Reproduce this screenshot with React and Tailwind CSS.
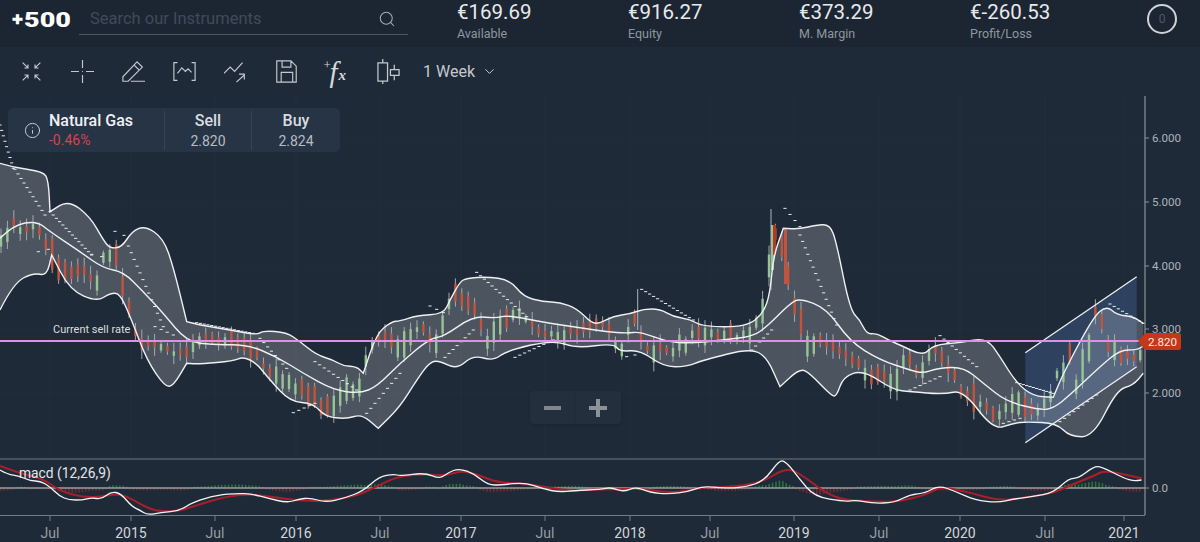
import React from "react";
import { Search, Info, ChevronDown } from "lucide-react";

// helpers: the point lists were read off zoomed crops, so map them back to page coords
const z = (ox, pts) => pts.map(([x, y]) => [ox + x / 3, 160 + y / 3]);
const m = (ox, pts) => pts.map(([x, y]) => [ox + x / 2.613, 450 + y / 3]);

// midpoint quadratic smoothing so the bands don't look like polygons
const smooth = (pts) => {
  let d = `M${pts[0][0].toFixed(1)} ${pts[0][1].toFixed(1)}`;
  for (let i = 1; i < pts.length - 1; i++) {
    const mx = (pts[i][0] + pts[i + 1][0]) / 2;
    const my = (pts[i][1] + pts[i + 1][1]) / 2;
    d += ` Q${pts[i][0].toFixed(1)} ${pts[i][1].toFixed(1)} ${mx.toFixed(1)} ${my.toFixed(1)}`;
  }
  const last = pts[pts.length - 1];
  return `${d} L${last[0].toFixed(1)} ${last[1].toFixed(1)}`;
};

const at = (pts, x) => {
  for (let i = 0; i < pts.length - 1; i++) {
    if (x >= pts[i][0] && x <= pts[i + 1][0]) {
      const t = (x - pts[i][0]) / (pts[i + 1][0] - pts[i][0] || 1);
      return pts[i][1] + (pts[i + 1][1] - pts[i][1]) * t;
    }
  }
  return pts[pts.length - 1][1];
};

// repeated points keep the sharp notches at the band breaks
const upper = [
  ...z(0, [[0,10],[40,22],[130,35],[145,60],[150,155],[150,155],[205,120],[270,170],[310,240],[330,265],[365,262],[395,215],[435,197],[490,235],[520,320],[560,485],[560,485],[600,495],[690,510],[770,525],[790,512],[860,517],[900,545],[950,585],[1000,600],[1030,618],[1070,620],[1090,640],[1090,640],[1130,520],[1175,485]]),
  ...z(400, [[0,483],[50,467],[130,462],[150,420],[180,365],[200,355],[260,350],[330,360],[370,410],[430,425],[480,427],[530,445],[575,490],[600,490],[640,468],[690,462],[730,447],[780,447],[820,470],[870,478],[910,500],[1040,500],[1090,460],[1110,400],[1120,290],[1150,205],[1150,205]]),
  ...z(800, [[0,207],[40,197],[90,192],[110,250],[150,450],[180,480],[200,522],[230,520],[265,540],[300,555],[370,588],[400,555],[480,548],[560,533],[600,590],[650,670],[700,708],[760,712],[760,712],[790,640],[880,470],[920,437],[950,465],[1000,470],[1030,490]]),
];
const lower = [
  ...z(0, [[0,450],[40,370],[100,338],[140,348],[155,285],[155,285],[210,390],[290,425],[330,400],[360,400],[395,480],[440,600],[495,680],[520,678],[560,610],[560,610],[600,612],[700,603],[730,590],[770,610],[810,660],[870,725],[940,730],[975,770],[1040,777],[1085,762],[1135,805],[1135,805]]),
  ...z(400, [[0,740],[50,660],[90,605],[120,603],[170,628],[220,585],[280,603],[320,572],[460,540],[530,565],[640,550],[660,575],[720,570],[790,620],[860,620],[910,600],[1050,565],[1100,590],[1140,680],[1140,680]]),
  ...z(800, [[0,625],[30,640],[95,708],[110,708],[130,650],[190,630],[280,690],[330,695],[430,703],[490,690],[580,810],[640,790],[680,785],[770,790],[810,830],[880,830],[950,690],[1000,675],[1030,640]]),
];
const middle = [
  ...z(0, [[0,235],[40,195],[110,183],[150,215],[240,275],[310,325],[370,335],[430,395],[490,460],[560,545],[640,555],[740,553],[830,590],[910,640],[1000,690],[1080,700],[1130,680]]),
  ...z(400, [[0,610],[90,535],[130,530],[220,468],[290,475],[320,465],[450,490],[550,505],[620,515],[680,520],[720,515],[800,545],[870,550],[970,540],[1050,530],[1090,510],[1170,430]]),
  ...z(800, [[0,415],[80,445],[150,545],[240,600],[330,630],[370,640],[410,625],[490,620],[550,670],[620,725],[720,750],[760,745],[810,705],[900,620],[960,570],[1010,570],[1030,558]]),
];
const price = [
  ...z(0, [[0,235],[40,190],[70,205],[110,190],[130,225],[155,270],[180,345],[230,330],[290,365],[320,270],[345,280],[370,380],[400,500],[440,560],[500,560],[550,590],[600,540],[700,545],[770,590],[830,640],[880,680],[950,720],[980,745],[1040,700],[1085,680],[1100,600],[1135,530]]),
  ...z(400, [[0,570],[60,500],[110,560],[150,410],[180,400],[220,450],[260,540],[300,490],[360,450],[420,510],[480,520],[560,510],[620,490],[660,570],[700,480],[740,570],[800,570],[870,540],[920,515],[980,520],[1040,540],[1090,460],[1120,220],[1150,250],[1170,400]]),
  ...z(800, [[0,480],[30,570],[70,545],[130,590],[200,640],[280,670],[320,590],[360,640],[400,570],[430,590],[460,650],[500,710],[560,740],[590,780],[640,720],[680,730],[720,770],[770,660],[810,590],[830,680],[870,540],[890,440],[930,560],[970,590],[1010,600],[1030,560]]),
];

const macdWhite = [
  ...m(0, [[0,60],[20,73],[50,78],[80,93],[105,93],[130,110],[155,138],[180,150],[215,150],[240,143],[265,148],[290,125],[315,130],[345,170],[365,180],[385,195],[420,188],[470,182],[505,155],[570,135],[620,130],[660,132],[700,145],[750,158],[780,148],[810,143],[850,157],[900,145],[950,122],[990,80],[1030,72],[1045,78],[1110,68],[1150,87],[1170,68],[1200,55],[1240,72],[1275,105],[1310,105],[1370,97],[1420,117],[1460,126],[1500,122]]),
  ...m(600, [[0,118],[30,112],[60,126],[95,110],[130,128],[180,132],[230,125],[270,108],[320,115],[380,112],[430,92],[470,28],[490,40],[520,85],[560,140],[640,155],[670,150],[710,160],[770,158],[810,133],[850,130],[885,106],[930,125],[980,150],[1040,158],[1080,147],[1130,140],[1185,128],[1225,85],[1250,85],[1290,50],[1310,50],[1370,85],[1395,93],[1415,90]]),
];
const macdRed = [
  ...m(0, [[0,48],[50,70],[110,85],[160,125],[220,142],[270,140],[310,130],[350,150],[390,178],[430,185],[470,182],[530,160],[590,140],[650,132],[720,142],[770,150],[850,155],[940,135],[990,105],[1040,80],[1110,72],[1160,78],[1210,62],[1250,75],[1300,98],[1370,100],[1440,115],[1500,122]]),
  ...m(600, [[0,118],[60,118],[100,115],[180,128],[230,122],[270,112],[330,112],[420,100],[490,50],[540,85],[590,130],[640,150],[720,155],[780,155],[850,135],[890,110],[960,125],[1050,155],[1130,138],[1185,130],[1230,105],[1290,78],[1320,60],[1415,85]]),
];

// parabolic sar runs: [offset, x0, y0, x1, y1, dashes] in crop coords
const sarRuns = [
  [0, 0, -105, 40, 25, 9], [0, 45, 28, 135, 165, 11], [0, 150, 155, 275, 285, 14], [0, 115, 275, 145, 268, 2], [0, 275, 283, 305, 290, 2],
  [0, 345, 214, 372, 226, 2], [0, 385, 258, 490, 500, 13], [0, 465, 500, 520, 525, 4], [0, 590, 488, 760, 520, 16],
  [0, 780, 535, 860, 625, 8], [0, 945, 605, 1070, 690, 10], [0, 880, 758, 945, 730, 5], [0, 1100, 760, 1200, 640, 9],
  [400, 135, 592, 220, 510, 8], [400, 345, 592, 460, 540, 9], [400, 90, 438, 130, 458, 3], [400, 230, 337, 380, 470, 14],
  [400, 725, 388, 880, 480, 14], [400, 680, 590, 705, 585, 2], [400, 1055, 570, 1115, 510, 6], [400, 1155, 145, 1200, 200, 4],
  [800, 0, 225, 110, 495, 15], [800, 420, 527, 530, 620, 10], [800, 330, 690, 420, 650, 7], [800, 610, 790, 660, 775, 4],
  [800, 780, 785, 890, 705, 9], [800, 930, 432, 1030, 490, 9], [800, 650, 668, 760, 700, 12],
];

const rnd = (i) => {
  const v = Math.sin(i * 127.1 + 11.7) * 43758.5453;
  return v - Math.floor(v);
};

const candles = [];
for (let i = 0, x = 1; x < 1143; i++, x += 6.4) {
  const y = at(price, x) + (rnd(i + 7) - 0.5) * 10;
  const next = at(price, x + 6.4);
  const up = next + (rnd(i) - 0.5) * 14 < y;
  const size = 4 + rnd(i + 40) * rnd(i + 41) * 24 + Math.abs(next - y) * 0.4;
  candles.push({ x, y, up, size, wick: 2 + rnd(i + 90) * 7 });
}

const xLabels = [
  [50, "Jul"], [131, "2015"], [215, "Jul"], [296, "2016"], [380, "Jul"], [461, "2017"], [545, "Jul"],
  [630, "2018"], [710, "Jul"], [794, "2019"], [879, "Jul"], [960, "2020"], [1045, "Jul"], [1124, "2021"],
];
const yLabels = [[138, "6.000"], [202, "5.000"], [266, "4.000"], [329, "3.000"], [393, "2.000"], [488, "0.0"]];

function Chart() {
  const bars = [];
  for (let x = 0; x < 1142; x += 3.4) {
    bars.push({ x, d: (at(macdRed, x) - at(macdWhite, x)) * 0.7 + 3 * Math.sin(x / 17) });
  }
  return (
    <svg className="block" width="1200" height="446" viewBox="0 96 1200 446" fontFamily="Roboto, sans-serif">
      {xLabels.map(([x]) => (
        <line key={x} x1={x} x2={x} y1="96" y2="459" stroke="#ffffff" strokeOpacity="0.025" />
      ))}
      {yLabels.slice(0, 5).map(([y]) => (
        <line key={y} x1="0" x2="1145" y1={y} y2={y} stroke="#ffffff" strokeOpacity="0.015" />
      ))}

      <polygon points="1025.3,352.7 1136.7,276.7 1136.7,366.7 1025.3,442.7" fill="#3a5682" fillOpacity="0.55" />
      <path d={`${smooth(upper)} ${smooth([...lower].reverse()).replace("M", "L")} Z`} fill="#ffffff" fillOpacity="0.2" />

      {candles.map((c, i) => (
        <g key={i}>
          <line x1={c.x} x2={c.x} y1={c.y - c.size / 2 - c.wick} y2={c.y + c.size / 2 + c.wick} stroke="#aeb4b8" strokeWidth="0.9" />
          <rect x={c.x - 1.2} y={c.y - c.size / 2} width="2.4" height={c.size} fill={c.up ? "#97c395" : "#c2533c"} />
        </g>
      ))}
      {/* the tall wicks stand out from the rest */}
      <line x1="637.7" x2="637.7" y1="289" y2="330" stroke="#aeb4b8" />
      <line x1="771" x2="771" y1="209" y2="290" stroke="#aeb4b8" />
      <rect x="771" y="225" width="3" height="45" fill="#97c395" />
      <rect x="773" y="225" width="3" height="30" fill="#b5391f" />
      <rect x="784" y="229" width="3" height="55" fill="#c2533c" />

      {sarRuns.flatMap(([ox, x0, y0, x1, y1, n], r) =>
        Array.from({ length: n }, (_, i) => {
          const t = n > 1 ? i / (n - 1) : 0;
          const x = ox + (x0 + (x1 - x0) * t) / 3;
          const y = 160 + (y0 + (y1 - y0) * t) / 3;
          return <line key={`${r}-${i}`} x1={x - 1.6} x2={x + 1.6} y1={y} y2={y} stroke="#e8eaec" strokeWidth="1" />;
        })
      )}

      <path d={smooth(upper)} fill="none" stroke="#eef0f2" strokeWidth="1.4" />
      <path d={smooth(lower)} fill="none" stroke="#eef0f2" strokeWidth="1.4" />
      <path d={smooth(middle)} fill="none" stroke="#eef0f2" strokeWidth="1.4" />
      <line x1="1025.3" y1="352.7" x2="1136.7" y2="276.7" stroke="#eef0f2" strokeWidth="1.3" />
      <line x1="1025.3" y1="442.7" x2="1136.7" y2="366.7" stroke="#eef0f2" strokeWidth="1.3" />

      <line x1="0" x2="1145" y1="341" y2="341" stroke="#e58de4" strokeWidth="2" />
      <text x="53" y="333" fontSize="11" fill="#d9dcdf">Current sell rate</text>

      {/* axes */}
      <line x1="1145" x2="1145" y1="96" y2="515" stroke="#8b9299" strokeWidth="1.2" />
      {yLabels.map(([y, label]) => (
        <g key={label}>
          <line x1="1145" x2="1149" y1={y} y2={y} stroke="#8b9299" />
          <text x="1152" y={y + 4} fontSize="11.6" fill="#aeb3b8">{label}</text>
        </g>
      ))}
      <path d="M1138 341 L1144 334.5 Q1145 333 1147 333 H1179 Q1181 333 1181 335 V348 Q1181 350 1179 350 H1147 Q1145 350 1144 348.5 Z" fill="#c5371a" />
      <text x="1148" y="345.500" fontSize="11.6" fill="#f4e6e2">2.820</text>

      {/* macd panel */}
      <line x1="0" x2="1145" y1="459" y2="459" stroke="#737b83" strokeWidth="1.2" />
      <line x1="0" x2="1145" y1="515.500" y2="515.500" stroke="#737b83" strokeWidth="1.2" />
      {bars.map((b) => (
        <rect
          key={b.x}
          x={b.x}
          y={b.d > 0 ? 488 - Math.min(b.d * 0.6 + 1, 20) : 488}
          width="1.6"
          height={Math.min(Math.abs(b.d) * 0.6 + 1, 20)}
          fill={b.d > 0 ? "#2f8a3f" : "#8c2b33"}
          fillOpacity="0.75"
        />
      ))}
      <line x1="0" x2="1145" y1="488" y2="488" stroke="#9a9f9f" strokeWidth="1.6" />
      <path d={smooth(macdRed)} fill="none" stroke="#a81f2a" strokeWidth="2" />
      <path d={smooth(macdWhite)} fill="none" stroke="#f2f3f4" strokeWidth="1.3" />
      <text x="19" y="478" fontSize="13.8" fill="#e3e5e7">macd (12,26,9)</text>

      {xLabels.map(([x, label]) => (
        <g key={x}>
          <line x1={x} x2={x} y1="515" y2="521" stroke="#737b83" />
          <text x={x} y="537.500" fontSize="14" textAnchor="middle" fill={label === "Jul" ? "#979da3" : "#d3d6d9"}>{label}</text>
        </g>
      ))}
    </svg>
  );
}

const iconProps = {
  width: 23,
  height: 23,
  viewBox: "0 0 26 26",
  fill: "none",
  stroke: "#c4c9ce",
  strokeWidth: 1.3,
};

const toolIcons = [
  <svg {...iconProps}>
    <path d="M3 3l6 6M9 5v4H5M23 3l-6 6M17 5v4h4M3 23l6-6M5 17h4v4M23 23l-6-6M21 17h-4v4" />
  </svg>,
  <svg {...iconProps}>
    <path d="M13 0v9M13 17v9M0 13h9M17 13h9M12.5 13h1" />
  </svg>,
  <svg {...iconProps}>
    <path d="M1 24v-5L17 2l6 6L7 24zM14 6l5 5M10 24h16" />
  </svg>,
  <svg {...iconProps}>
    <path d="M5 3H1v20h4M21 3h4v20h-4M5 15l5-6 4 4 3-3 4 4" />
  </svg>,
  <svg {...iconProps}>
    <path d="M0 15l7-7 5 5 9-10M14 25l9-8M17 16h6v6" />
  </svg>,
  <svg {...iconProps}>
    <path d="M2 1h16l6 6v18H2zM8 1v7h10V1M7 25V14h13v11" />
  </svg>,
  <div className="relative h-[24px] w-[24px] font-['Liberation_Serif',serif] italic text-[#d5d9dd]">
    <span className="absolute left-[-2px] top-[-5px] text-[13px] not-italic">+</span>
    <span className="absolute left-[4px] top-[-3px] text-[29px] leading-[30px]">f</span>
    <span className="absolute left-[13px] top-[5px] text-[15px] font-bold leading-[20px]">x</span>
  </div>,
  <svg {...iconProps} width="25" height="25">
    <path d="M7 0v4M7 23v3M2 4h10v19H2zM19 6v5M19 17v5M15 11h9v6h-9z" />
  </svg>,
];

function Stat({ value, label }) {
  return (
    <div className="w-[171px]">
      <div className="text-[20.5px] leading-[24px] text-[#e7eaec]">{value}</div>
      <div className="mt-[2px] text-[12.5px] leading-[16px] text-[#8e969e]">{label}</div>
    </div>
  );
}

function Quote({ title, value, className }) {
  return (
    <div className={`flex flex-col items-center border-l border-[#34445a] ${className}`}>
      <div className="text-[16px] font-medium leading-[20px] text-[#d9dde1]">{title}</div>
      <div className="mt-[1px] text-[14px] leading-[18px] text-[#b6bcc3]">{value}</div>
    </div>
  );
}

export default function App() {
  return (
    <div className="flex h-[542px] w-[1200px] flex-col overflow-hidden bg-[#1f2a38] font-['Roboto',sans-serif]">
      <header className="flex h-[47px] items-start bg-[#1c2633]">
        <div className="flex h-[39px] w-[79px] items-center pl-[12px]">
          <span className="text-[13px] font-black leading-none text-white">✚</span>
          <span className="ml-[1px] origin-left scale-x-[1.35] text-[20px] font-black leading-none text-white">500</span>
        </div>
        <div className="mt-[1px] flex h-[34px] w-[329px] items-center justify-between border-b border-[#4a5663] pl-[11px] pr-[12px] pt-[3px]">
          <span className="text-[16.5px] text-[#3f4b59]">Search our Instruments</span>
          <Search size={18} strokeWidth={1.4} color="#a5abb1" />
        </div>
        <div className="ml-[49px] flex">
          <Stat value="€169.69" label="Available" />
          <Stat value="€916.27" label="Equity" />
          <Stat value="€373.29" label="M. Margin" />
          <Stat value="€-260.53" label="Profit/Loss" />
        </div>
        <div className="ml-[6px] mt-[4px] flex h-[30px] w-[30px] items-center justify-center rounded-full border-2 border-[#cfd3d7] text-[12px] text-[#4d5864]">
          0
        </div>
      </header>

      <div className="flex h-[49px] items-center px-[6px]">
        {toolIcons.map((icon, i) => (
          <div key={i} className="flex w-[51px] justify-center">{icon}</div>
        ))}
        <div className="ml-[9px] flex items-center text-[16px] text-[#c4c9ce]">
          1 Week
          <ChevronDown size={15} strokeWidth={1.6} className="ml-[7px]" />
        </div>
      </div>

      <div className="relative flex-1">
        <Chart />

        <div className="absolute left-[8px] top-[12px] flex h-[44px] w-[332px] items-center rounded-[5px] bg-[#263446]">
          <div className="flex w-[156px] items-center pl-[16px]">
            <Info size={17} strokeWidth={1.3} color="#d3d7db" />
            <div className="ml-[8px]">
              <div className="text-[16px] font-medium leading-[20px] text-[#eef0f2]">Natural Gas</div>
              <div className="text-[14px] leading-[18px] text-[#d8434c]">-0.46%</div>
            </div>
          </div>
          <Quote title="Sell" value="2.820" className="w-[87px]" />
          <Quote title="Buy" value="2.824" className="w-[89px]" />
        </div>

        <div className="absolute left-[530px] top-[295px] flex h-[33px] w-[91px] rounded-[4px] bg-[#242f3d] shadow-sm">
          <div className="flex w-[45px] items-center justify-center border-r border-[#1f2a38]">
            <div className="h-[4px] w-[17px] bg-[#7f868e]" />
          </div>
          <div className="relative flex flex-1 items-center justify-center">
            <div className="h-[4px] w-[18px] bg-[#8b9299]" />
            <div className="absolute h-[18px] w-[4px] bg-[#8b9299]" />
          </div>
        </div>
      </div>
    </div>
  );
}
